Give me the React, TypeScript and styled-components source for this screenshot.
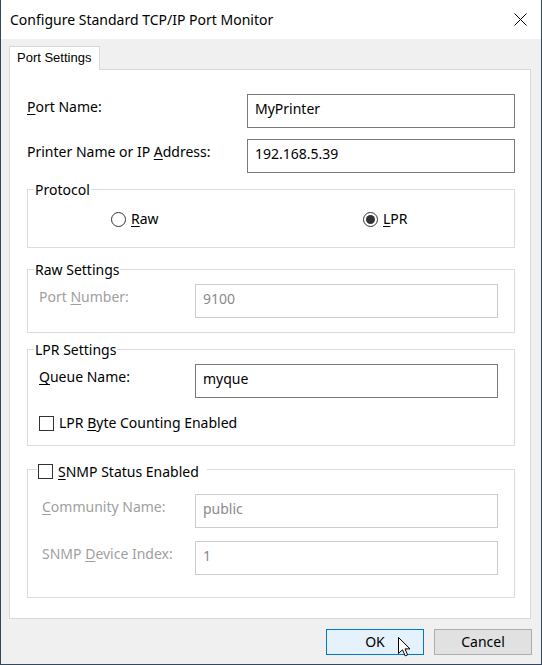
import React from "react";
import styled, { createGlobalStyle } from "styled-components";

const Global = createGlobalStyle`
  html, body { margin: 0; padding: 0; background: #f0f0f0; }
  * { box-sizing: border-box; }
`;

const UI_FONT = `"Noto Sans", "Open Sans", sans-serif`;

const Window = styled.div`
  position: relative;
  width: 542px;
  height: 665px;
  background: #f0f0f0;
  border: 1px solid #34475d;
  border-top: none;
  display: flex;
  flex-direction: column;
  font-family: ${UI_FONT};
  font-size: 14px;
  color: #000;
  overflow: hidden;
`;

const TitleBar = styled.div`
  flex: none;
  height: 39px;
  background: #fff;
  display: flex;
  align-items: center;
  padding-left: 9px;
`;

const Title = styled.div`
  flex: 1;
  font-size: 14px;
  line-height: 20px;
  padding-top: 1px;
  white-space: nowrap;
`;

const CloseButton = styled.div`
  width: 42px;
  height: 39px;
  display: flex;
  align-items: center;
  justify-content: center;
`;

const TabStrip = styled.div`
  flex: none;
  display: flex;
  padding: 7px 0 0 8px;
`;

const Tab = styled.div`
  position: relative;
  z-index: 1;
  height: 24px;
  margin-bottom: -1px;
  padding: 0 8px 0 7px;
  background: #fff;
  border: 1px solid #d9d9d9;
  border-bottom: none;
  font-family: "Liberation Sans", Arial, sans-serif;
  font-size: 13px;
  line-height: 22px;
  white-space: nowrap;
`;

const Panel = styled.div`
  flex: none;
  margin: 0 10px 0 8px;
  background: #fff;
  border: 1px solid #d9d9d9;
  padding: 24px 15px 20px 17px;
  display: flex;
  flex-direction: column;
`;

const Row = styled.div<{ $gap?: number; $indent?: number }>`
  display: flex;
  align-items: flex-start;
  margin-top: ${(p) => p.$gap ?? 0}px;
  padding-left: ${(p) => p.$indent ?? 0}px;
`;

const Label = styled.div<{ $width: number; $disabled?: boolean }>`
  width: ${(p) => p.$width}px;
  flex: none;
  padding-top: 3px;
  line-height: 20px;
  white-space: nowrap;
  color: ${(p) => (p.$disabled ? "#a0a0a0" : "#000")};
`;

const Acc = styled.u`
  text-decoration-thickness: 1px;
  text-underline-offset: 2px;
`;

const Edit = styled.input<{ $width: number }>`
  width: ${(p) => p.$width}px;
  height: 34px;
  flex: none;
  margin: 0;
  padding: 0 7px 6px 7px;
  border: 1px solid #7a7a7a;
  border-radius: 0;
  background: #fff;
  font-family: ${UI_FONT};
  font-size: 14px;
  color: #000;
  outline: none;
  &:disabled {
    border-color: #cccccc;
    color: #8a8a8a;
    -webkit-text-fill-color: #8a8a8a;
    background: #fff;
  }
`;

const Group = styled.div<{ $gap: number; $pb: number }>`
  margin-top: ${(p) => p.$gap}px;
  border: 1px solid #dcdcdc;
  padding-bottom: ${(p) => p.$pb}px;
  display: flex;
  flex-direction: column;
`;

const GroupTitle = styled.div<{ $top?: number; $left?: number; $pr?: number }>`
  align-self: flex-start;
  display: flex;
  align-items: center;
  gap: 5px;
  height: 20px;
  line-height: 20px;
  margin-top: ${(p) => p.$top ?? -11}px;
  margin-left: ${(p) => p.$left ?? 6}px;
  padding: 1px ${(p) => p.$pr ?? 1}px 0 1px;
  background: #fff;
  white-space: nowrap;
`;

const RadioRow = styled.div`
  margin-top: 10px;
  padding-left: 83px;
  display: grid;
  grid-template-columns: 252px auto;
  height: 20px;
`;

const Choice = styled.label`
  display: flex;
  align-items: center;
  gap: 5px;
  height: 20px;
  line-height: 20px;
  white-space: nowrap;
`;

const RadioCircle = styled.span<{ $checked?: boolean }>`
  width: 15px;
  height: 15px;
  flex: none;
  border: 1px solid #333;
  border-radius: 50%;
  background: #fff;
  display: flex;
  align-items: center;
  justify-content: center;
  &::after {
    content: "";
    width: 9px;
    height: 9px;
    border-radius: 50%;
    background: #333;
    display: ${(p) => (p.$checked ? "block" : "none")};
  }
`;

const CheckBox = styled.span`
  width: 15px;
  height: 15px;
  flex: none;
  border: 1px solid #333;
  background: #fff;
`;

const ButtonRow = styled.div`
  flex: none;
  margin-top: 10px;
  padding-right: 9px;
  display: flex;
  justify-content: flex-end;
  gap: 10px;
`;

const Button = styled.button<{ $default?: boolean }>`
  width: 98px;
  height: 26px;
  margin: 0;
  padding: 0;
  border: 1px solid ${(p) => (p.$default ? "#0078d7" : "#adadad")};
  background: ${(p) => (p.$default ? "#e5f1fb" : "#e1e1e1")};
  border-radius: 0;
  font-family: ${UI_FONT};
  font-size: 14px;
  line-height: 20px;
  color: #000;
`;

const Cursor = styled.svg`
  position: absolute;
  left: 397px;
  top: 637px;
  pointer-events: none;
`;

export default function App() {
  return (
    <>
      <Global />
      <Window>
        <TitleBar>
          <Title>Configure Standard TCP/IP Port Monitor</Title>
          <CloseButton>
            <svg width="13" height="13" viewBox="0 0 13 13">
              <path d="M0.5 0.5 L12.5 12.5 M12.5 0.5 L0.5 12.5" stroke="#000" strokeWidth="1" fill="none" />
            </svg>
          </CloseButton>
        </TitleBar>

        <TabStrip>
          <Tab>Port Settings</Tab>
        </TabStrip>

        <Panel>
          <Row>
            <Label $width={220}>
              <Acc>P</Acc>ort Name:
            </Label>
            <Edit $width={268} readOnly value="MyPrinter" />
          </Row>
          <Row $gap={11}>
            <Label $width={220}>
              Printer Name or IP <Acc>A</Acc>ddress:
            </Label>
            <Edit $width={268} readOnly value="192.168.5.39" />
          </Row>

          <Group $gap={16} $pb={18}>
            <GroupTitle>Protocol</GroupTitle>
            <RadioRow>
              <Choice>
                <RadioCircle />
                <span>
                  <Acc>R</Acc>aw
                </span>
              </Choice>
              <Choice>
                <RadioCircle $checked />
                <span>
                  <Acc>L</Acc>PR
                </span>
              </Choice>
            </RadioRow>
          </Group>

          <Group $gap={21} $pb={14}>
            <GroupTitle>Raw Settings</GroupTitle>
            <Row $gap={5} $indent={11}>
              <Label $width={156} $disabled>
                Port <Acc>N</Acc>umber:
              </Label>
              <Edit $width={303} disabled value="9100" />
            </Row>
          </Group>

          <Group $gap={16} $pb={12}>
            <GroupTitle>LPR Settings</GroupTitle>
            <Row $gap={5} $indent={11}>
              <Label $width={156}>
                <Acc>Q</Acc>ueue Name:
              </Label>
              <Edit $width={303} readOnly value="myque" />
            </Row>
            <Row $gap={15} $indent={11}>
              <Choice>
                <CheckBox />
                <span>
                  LPR <Acc>B</Acc>yte Counting Enabled
                </span>
              </Choice>
            </Row>
          </Group>

          <Group $gap={23} $pb={22}>
            <GroupTitle $top={-9} $left={9} $pr={8}>
              <CheckBox />
              <span>
                <Acc>S</Acc>NMP Status Enabled
              </span>
            </GroupTitle>
            <Row $gap={13} $indent={14}>
              <Label $width={153} $disabled>
                <Acc>C</Acc>ommunity Name:
              </Label>
              <Edit $width={303} disabled value="public" />
            </Row>
            <Row $gap={13} $indent={14}>
              <Label $width={153} $disabled>
                SNMP <Acc>D</Acc>evice Index:
              </Label>
              <Edit $width={303} disabled value="1" />
            </Row>
          </Group>
        </Panel>

        <ButtonRow>
          <Button $default>OK</Button>
          <Button>Cancel</Button>
        </ButtonRow>

        <Cursor width="13" height="20" viewBox="0 0 13 20">
          <path
            d="M0.5 0.5 L0.5 16.5 L4.5 12.8 L7.2 18.9 L9.6 17.9 L7 11.9 L12 11.9 Z"
            fill="#fff"
            stroke="#000"
            strokeWidth="1"
            strokeLinejoin="miter"
          />
        </Cursor>
      </Window>
    </>
  );
}
